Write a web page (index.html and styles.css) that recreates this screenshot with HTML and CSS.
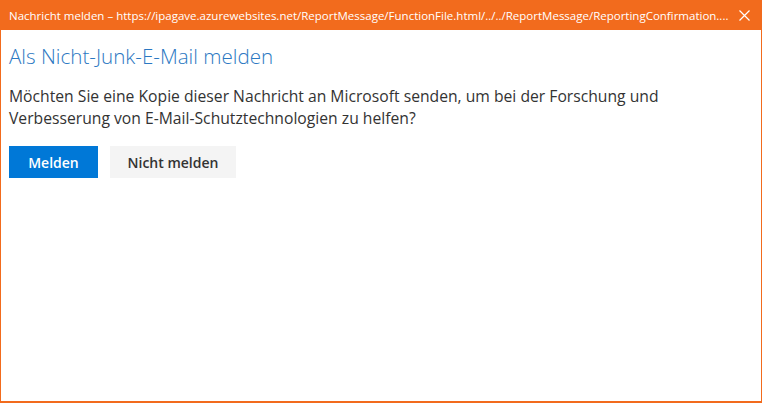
FILE: index.html
```html
<!DOCTYPE html>
<html lang="de">
<head>
<meta charset="utf-8">
<title>Nachricht melden</title>
<link rel="stylesheet" href="styles.css">
</head>
<body>
<div class="window">
  <div class="titlebar">
    <span class="title">Nachricht melden – https://ipagave.azurewebsites.net/ReportMessage/FunctionFile.html/../../ReportMessage/ReportingConfirmation....</span>
    <svg class="close" width="11" height="11" viewBox="0 0 11 11"><path d="M0.5 0.5L10.5 10.5M10.5 0.5L0.5 10.5" stroke="#fff" stroke-width="1.2" fill="none"/></svg>
  </div>
  <div class="content">
    <h1 class="heading">Als Nicht-Junk-E-Mail melden</h1>
    <p class="message">Möchten Sie eine Kopie dieser Nachricht an Microsoft senden, um bei der Forschung und Verbesserung von E-Mail-Schutztechnologien zu helfen?</p>
    <div class="actions">
      <button class="btn btn-primary">Melden</button>
      <button class="btn btn-default">Nicht melden</button>
    </div>
  </div>
</div>
</body>
</html>
```
FILE: styles.css
```css
html, body {
  margin: 0;
  padding: 0;
  width: 762px;
  height: 403px;
  overflow: hidden;
}
body {
  font-family: "Open Sans", "Noto Sans", sans-serif;
}
.window {
  box-sizing: border-box;
  width: 762px;
  height: 403px;
  border: 1px solid #f26b1d;
  border-top: none;
  border-bottom-width: 2px;
  display: flex;
  flex-direction: column;
  background: #fff;
}
.titlebar {
  height: 30px;
  margin: 0 -1px;
  background: #f26b1d;
  color: #fff;
  display: flex;
  align-items: center;
  padding: 0 12px 0 9px;
  flex: none;
}
.title {
  font-size: 11.5px;
  white-space: nowrap;
  overflow: hidden;
  flex: 1;
  min-width: 0;
}
.close {
  display: block;
  flex: none;
  margin-left: 8px;
}
.content {
  padding: 12px 8px;
}
.heading {
  margin: 0;
  font-size: 20.6px;
  font-weight: 300;
  color: #2b78c2;
  line-height: 28px;
}
.message {
  margin: 15px 0 0;
  font-size: 15.7px;
  line-height: 22px;
  color: #333;
  max-width: 700px;
}
.actions {
  margin-top: 17px;
  display: flex;
  gap: 12px;
}
.btn {
  font-family: inherit;
  font-size: 14px;
  font-weight: 600;
  height: 32px;
  border: none;
  padding: 0;
  white-space: nowrap;
}
.btn-primary {
  background: #0078d7;
  color: #fff;
  width: 89px;
}
.btn-default {
  background: #f4f4f4;
  color: #333;
  width: 126px;
}
```
